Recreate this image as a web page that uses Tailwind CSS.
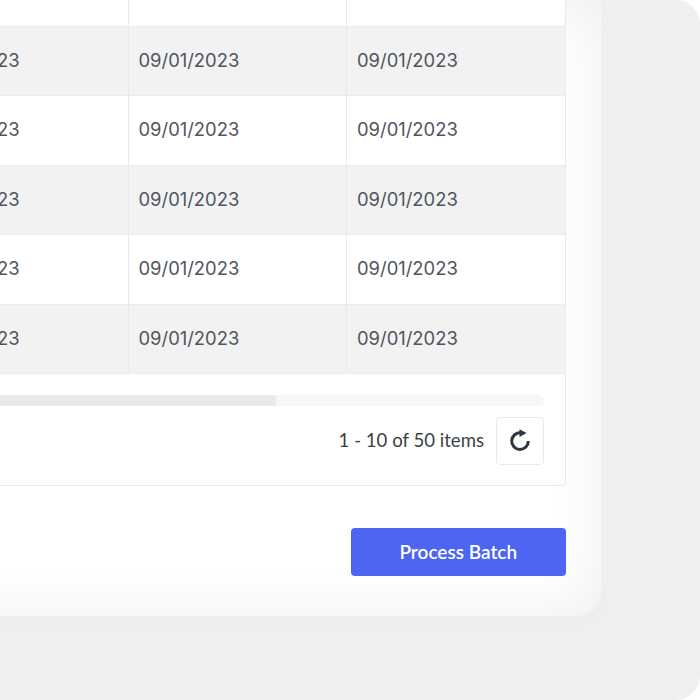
<!DOCTYPE html>
<html><head><meta charset="utf-8"><script src="https://cdn.jsdelivr.net/npm/@tailwindcss/browser@4"></script></head>
<body class="bg-white">
<div class="w-[700px] h-[700px] overflow-hidden bg-[#f0f0f0] rounded-r-[24px] flex flex-col justify-end items-end pb-[84px] pr-[99px]">
  <div class="w-[700px] shrink-0 bg-white rounded-br-[24px] shadow-[inset_0_0_60px_rgba(0,0,0,0.07),0_6px_30px_rgba(0,0,0,0.025)] pr-[35.5px] pb-[40px] flex flex-col items-end font-['Inter',sans-serif]">
    <div class="w-full bg-white border-r border-b border-[#e9eaee] rounded-br-[4px] text-[18.4px] text-[#4f5560]">
      <div class="grid grid-cols-[227.5px_218.5px_1fr] h-[27px] bg-white border-b border-[#ebebee]">
        <div class="border-r border-[#e9eaee]"></div><div class="border-r border-[#e9eaee]"></div><div></div>
      </div>
      <div class="grid grid-cols-[227.5px_218.5px_1fr] h-[69.5px] items-stretch bg-[#f2f2f2] border-b border-[#ebebee]">
        <div class="border-r border-[#e9eaee] flex items-center justify-end"><span class="mr-[108px]">23</span></div><div class="border-r border-[#e9eaee] flex items-center pl-[10px]">09/01/2023</div><div class="flex items-center pl-[10px]">09/01/2023</div>
      </div>
      <div class="grid grid-cols-[227.5px_218.5px_1fr] h-[69.5px] items-stretch bg-white border-b border-[#ebebee]">
        <div class="border-r border-[#e9eaee] flex items-center justify-end"><span class="mr-[108px]">23</span></div><div class="border-r border-[#e9eaee] flex items-center pl-[10px]">09/01/2023</div><div class="flex items-center pl-[10px]">09/01/2023</div>
      </div>
      <div class="grid grid-cols-[227.5px_218.5px_1fr] h-[69.5px] items-stretch bg-[#f2f2f2] border-b border-[#ebebee]">
        <div class="border-r border-[#e9eaee] flex items-center justify-end"><span class="mr-[108px]">23</span></div><div class="border-r border-[#e9eaee] flex items-center pl-[10px]">09/01/2023</div><div class="flex items-center pl-[10px]">09/01/2023</div>
      </div>
      <div class="grid grid-cols-[227.5px_218.5px_1fr] h-[69.5px] items-stretch bg-white border-b border-[#ebebee]">
        <div class="border-r border-[#e9eaee] flex items-center justify-end"><span class="mr-[108px]">23</span></div><div class="border-r border-[#e9eaee] flex items-center pl-[10px]">09/01/2023</div><div class="flex items-center pl-[10px]">09/01/2023</div>
      </div>
      <div class="grid grid-cols-[227.5px_218.5px_1fr] h-[69.5px] items-stretch bg-[#f2f2f2] border-b border-[#ebebee]">
        <div class="border-r border-[#e9eaee] flex items-center justify-end"><span class="mr-[108px]">23</span></div><div class="border-r border-[#e9eaee] flex items-center pl-[10px]">09/01/2023</div><div class="flex items-center pl-[10px]">09/01/2023</div>
      </div>
      <div class="h-[111px] pr-[20.5px] pt-[21px] flex flex-col">
        <div class="h-[11px] bg-[#f7f7f8] rounded-r-full"><div class="h-full w-[375px] bg-[#e8e8ed] rounded-r-[4px]"></div></div>
        <div class="flex justify-end items-center gap-[12px] mt-[11px]">
          <span class="font-['Lato',sans-serif] text-[18.6px] text-[#3b3f46]">1 - 10 of 50 items</span>
          <div class="w-[48px] h-[48px] border border-[#e9eaee] rounded-[4px] flex items-center justify-center">
            <svg width="24" height="24" viewBox="0 0 24 24" fill="none" stroke="#2f3542" stroke-width="3"><path d="M13 3.9A8.3 8.3 0 1 0 20.3 12"/><path d="M11.5 0.2 L18.6 4 L11.5 8 Z" fill="#2f3542" stroke="none"/></svg>
          </div>
        </div>
      </div>
    </div>
    <button class="mt-[42px] w-[214.5px] h-[48px] bg-[#4c65f2] rounded-[4px] text-white text-[19px] font-semibold font-['Lato',sans-serif]">Process Batch</button>
  </div>
</div>
</body></html>
